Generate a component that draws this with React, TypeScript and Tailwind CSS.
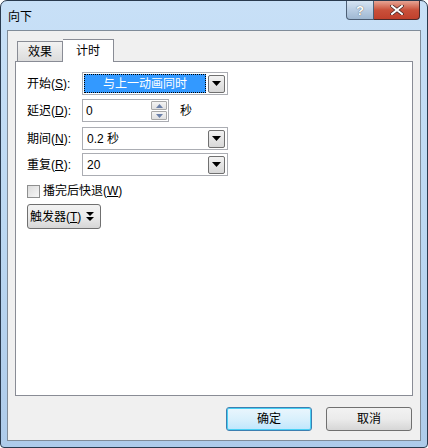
import React from 'react';

const font = { fontFamily: '"Liberation Sans", "Noto Sans CJK SC", sans-serif' };

const DropArrow: React.FC = () => (
  <svg width="9" height="5" viewBox="0 0 9 5">
    <path d="M0 0h9L4.5 5z" fill="#000" />
  </svg>
);

const DropButton: React.FC = () => (
  <div className="w-[17px] h-[18px] my-[1px] mr-[1px] border border-[#707070] rounded-[2px] bg-gradient-to-b from-[#f2f2f2] to-[#d8d8d8] flex items-center justify-center">
    <DropArrow />
  </div>
);

const Combo: React.FC<{ value: string; selected?: boolean }> = ({ value, selected }) => (
  <div className="w-[146px] h-[23px] border border-[#abadb3] bg-white flex items-center p-[1px]">
    {selected ? (
      <div className="flex-1 h-full mr-[2px] bg-[#3399ff] border border-dotted border-[#000] text-white text-[12px] flex items-center justify-center">
        {value}
      </div>
    ) : (
      <div className="flex-1 h-full pl-[3px] text-[12px] flex items-center">{value}</div>
    )}
    <DropButton />
  </div>
);

const Label: React.FC<{ text: string; k: string }> = ({ text, k }) => (
  <div className="w-[55px] text-[12px]">
    {text}(<span className="underline">{k}</span>):
  </div>
);

const SpinBtn: React.FC<{ up?: boolean }> = ({ up }) => (
  <div className="w-[16px] h-[9px] border border-[#a8a8a8] rounded-[1px] bg-gradient-to-b from-[#f4f4f4] to-[#e0e0e0] flex items-center justify-center">
    <svg width="7" height="4" viewBox="0 0 7 4">
      <path d={up ? 'M0 4h7L3.5 0z' : 'M0 0h7L3.5 4z'} fill="#6a7fa8" />
    </svg>
  </div>
);

export default function App() {
  return (
    <div style={font} className="w-[428px] h-[448px] text-[#000]">
      <div className="w-full h-full rounded-t-[7px] rounded-b-[4px] border border-[#2a3a4e] bg-gradient-to-b from-[#c8e0f7] via-[#bcd8f2] to-[#aecbea] flex flex-col">
        {/* title bar */}
        <div className="h-[29px] flex items-start shrink-0">
          <div className="pl-[7px] pt-[10px] text-[12px] leading-none">向下</div>
          <div className="ml-auto mr-[7px] flex">
            <div className="w-[28px] h-[19px] border border-[#4d5f75] border-t-0 rounded-bl-[4px] bg-gradient-to-b from-[#d6e4f2] via-[#b9cde3] to-[#9fb8d2] flex items-center justify-center text-white font-bold text-[13px] leading-none [text-shadow:0_0_1px_#333]">
              ?
            </div>
            <div className="w-[46px] h-[19px] border border-[#4d2a2a] border-t-0 border-l-0 rounded-br-[4px] bg-gradient-to-b from-[#e6a494] via-[#c9503a] to-[#c0402c] flex items-center justify-center">
              <svg width="14" height="10" viewBox="0 0 14 10">
                <path d="M2 1l10 8M12 1L2 9" stroke="#3a2020" strokeWidth="3.4" strokeLinecap="square" />
                <path d="M2 1l10 8M12 1L2 9" stroke="#fff" strokeWidth="2" strokeLinecap="square" />
              </svg>
            </div>
          </div>
        </div>

        {/* client area */}
        <div className="flex-1 mx-[6px] mb-[6px] border border-[#808c99] bg-[#f0f0f0] flex flex-col">
          <div className="px-[7px] pt-[7px]">
            {/* tabs */}
            <div className="flex items-end pl-[2px] h-[23px]">
              <div className="w-[46px] h-[20px] border border-[#898c95] border-b-0 bg-gradient-to-b from-[#f2f2f2] to-[#dcdcdc] text-[12px] flex items-center justify-center">
                效果
              </div>
              <div className="w-[51px] h-[23px] border border-[#898c95] border-b-0 border-l-0 bg-white text-[12px] flex items-center justify-center relative top-[1px] z-10">
                计时
              </div>
            </div>
            {/* panel */}
            <div className="h-[335px] border border-[#898c95] bg-white px-[11px] pt-[10px]">
              <div className="flex items-center h-[23px]">
                <Label text="开始" k="S" />
                <Combo value="与上一动画同时" selected />
              </div>
              <div className="flex items-center h-[23px] mt-[4px]">
                <Label text="延迟" k="D" />
                <div className="w-[87px] h-[23px] border border-[#abadb3] bg-white flex items-center">
                  <div className="flex-1 pl-[3px] text-[12px]">0</div>
                  <div className="flex flex-col gap-[1px] mr-[1px]">
                    <SpinBtn up />
                    <SpinBtn />
                  </div>
                </div>
                <div className="ml-[11px] text-[12px]">秒</div>
              </div>
              <div className="flex items-center h-[23px] mt-[5px]">
                <Label text="期间" k="N" />
                <Combo value="0.2 秒" />
              </div>
              <div className="flex items-center h-[23px] mt-[3px]">
                <Label text="重复" k="R" />
                <Combo value="20" />
              </div>
              <div className="flex items-center h-[16px] mt-[7px] gap-[3px]">
                <div className="w-[13px] h-[13px] border border-[#8e8f8f] bg-gradient-to-br from-[#dcdcdc] to-[#f6f6f6]" />
                <div className="text-[12px]">
                  播完后快退(<span className="underline">W</span>)
                </div>
              </div>
              <div className="mt-[5px] w-[74px] h-[25px] border border-[#707070] rounded-[3px] bg-gradient-to-b from-[#f2f2f2] via-[#ebebeb] to-[#d6d6d6] flex items-center px-[2px] gap-[5px]">
                <span className="text-[12px]">
                  触发器(<span className="underline">T</span>)
                </span>
                <svg width="8" height="9" viewBox="0 0 8 9">
                  <path d="M0 0h8L4 4z M0 5h8L4 9z" fill="#000" />
                </svg>
              </div>
            </div>
          </div>
          {/* buttons */}
          <div className="flex justify-end gap-[14px] pr-[8px] pt-[11px]">
            <div className="w-[86px] h-[24px] border border-[#3c7fb1] rounded-[3px] bg-gradient-to-b from-[#eaf6fd] via-[#d9f0fc] to-[#bee6fd] shadow-[inset_0_0_0_1px_#48d0f4] flex items-center justify-center text-[12px]">
              确定
            </div>
            <div className="w-[86px] h-[24px] border border-[#707070] rounded-[3px] bg-gradient-to-b from-[#f2f2f2] via-[#ebebeb] to-[#d6d6d6] flex items-center justify-center text-[12px]">
              取消
            </div>
          </div>
        </div>
      </div>
    </div>
  );
}
